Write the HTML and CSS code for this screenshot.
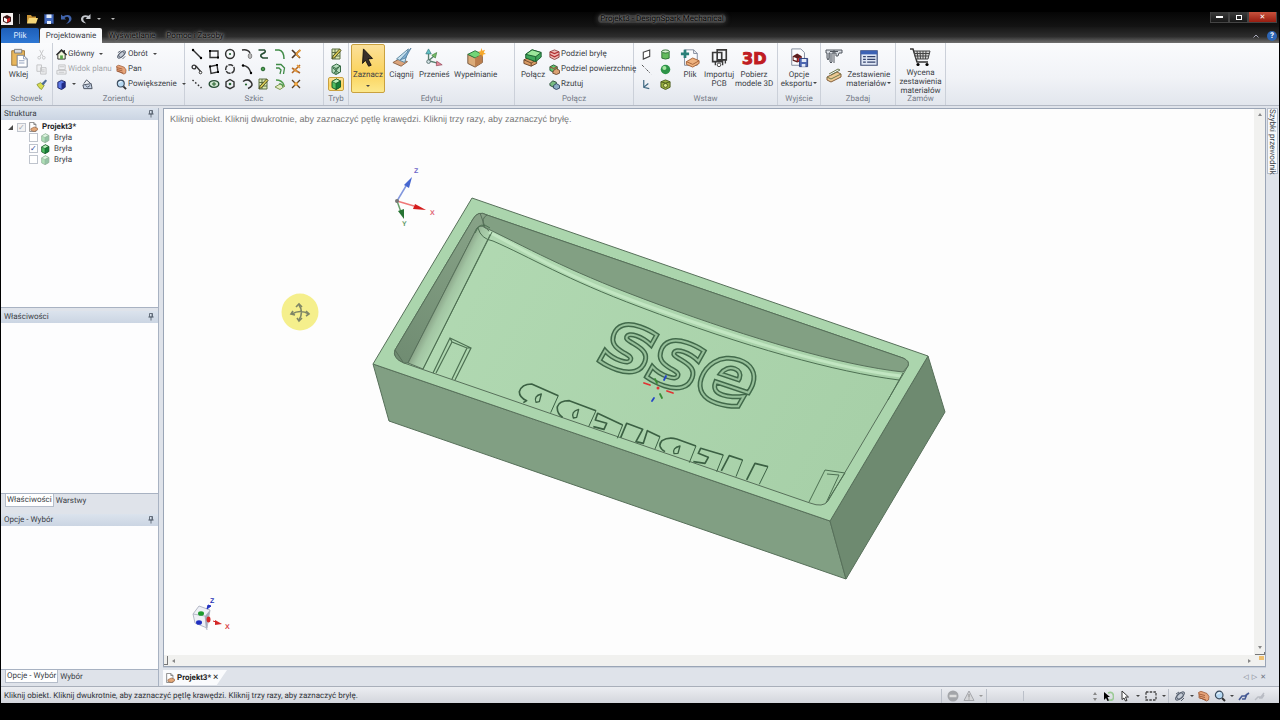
FILE: index.html
```html
<!DOCTYPE html>
<html lang="pl">
<head>
<meta charset="utf-8">
<title>Projekt3 - DesignSpark Mechanical</title>
<link rel="stylesheet" href="styles.css">
</head>
<body>
<svg class="defs" aria-hidden="true">
  <defs>
    <symbol id="doc" viewBox="0 0 12 12"><path d="M2 .5h5l2.500 2.500v8.500H2z" fill="#fff" stroke="#777"/><path d="M7 .5V3h2.500" fill="none" stroke="#777"/><path d="M3.500 8l4-2 4 1.500v2l-4 2-4-1.500z" fill="#e3a878" stroke="#8a5a3a" stroke-width=".7"/></symbol>
    <symbol id="cube" viewBox="0 0 12 12"><path d="M2 3.500L6.500 1 10.500 3v6L6 11.500 2 9.500z" fill="#4fbf62" stroke="#1c5c2a"/><path d="M2 3.500L6 5.500 10.500 3 6.500 1z" fill="#b9f0bd" stroke="#1c5c2a" stroke-width=".7"/><path d="M6 5.500v6l4.500-2.500V3z" fill="#16803a" stroke="#1c5c2a" stroke-width=".7"/></symbol>
    <symbol id="orbit" viewBox="0 0 12 12"><ellipse cx="6" cy="6" rx="5.500" ry="2.200" transform="rotate(-42 6 6)" fill="#c5ccd6" stroke="#596271"/><ellipse cx="6" cy="6" rx="3.600" ry="2.600" transform="rotate(-42 6 6)" fill="none" stroke="#596271"/><path d="M2 4l3-2M10 8l-3 3" stroke="#596271"/></symbol>
    <symbol id="hand" viewBox="0 0 12 12"><path d="M.5 2.500Q3 .5 5 2l4 1.500 2 3-.5 3.500-2 1-5-2.500-2.500-.5V5z" fill="#e6a47a" stroke="#93502e" stroke-width=".7"/><path d="M1 4l6 1.500M1 6l6 1.500M2 8l6 2" stroke="#93502e" stroke-width=".8"/></symbol>
    <symbol id="lens" viewBox="0 0 12 12"><path d="M8 8l3 3" stroke="#333" stroke-width="2"/><circle cx="5.200" cy="5" r="3.800" fill="#b6d8f2" stroke="#3a4a5c" stroke-width="1.200"/><path d="M3 4.500Q4 2.600 6 2.800" stroke="#fff" fill="none"/></symbol>
    <symbol id="pin" viewBox="0 0 6 8"><path d="M1.500.5h3v3.500h-3zM.3 4h5.400M3 4v3.500M4 .5v3.500" fill="none" stroke="#5a6472" stroke-width=".9"/></symbol>
    <symbol id="pencilbox" viewBox="0 0 12 12"><path d="M2 1h8v10H2zM2 4.500h8M2 8h8M5 1v10" fill="#dbe9b5" stroke="#5c7045"/><path d="M2 10.500L3 8l6.500-7L11 2.500 4.500 9.800z" fill="#d8ca54" stroke="#474a20" stroke-width=".9"/></symbol>
    <symbol id="cross" viewBox="0 0 12 12"><path d="M2 2l8 8M10 2L2 10" stroke="#4b3422" stroke-width="1.700"/><path d="M6 6l4.500-4M6 6l3.500 3.500" stroke="#e69a3b" stroke-width="1.700"/></symbol>
    <symbol id="undo" viewBox="0 0 12 12"><path d="M1 1.500v5h5L4.500 5Q8 2.500 9 5.500 9.500 8 6 11 12 9 11.500 5 10 0 3 3.200z" fill="#4164ac"/></symbol>
  </defs>
</svg>

<div class="app">
  <header class="titlebar">
    <div class="quick">
      <svg class="i12" viewBox="0 0 12 12"><path d="M0 0h12v12H0z" fill="#f5f0ef"/><path d="M2 4l4-2 4 2v4.500l-4 2-4-2z" fill="#3b1515"/><path d="M3 4.500l3 1.500v3.500l-3-1.500z" fill="#fff"/><path d="M6 6l3-1.500V8L6 9.500z" fill="#d52727"/></svg>
      <span class="tick"></span>
      <button aria-label="Otwórz"><svg class="i12" viewBox="0 0 12 12"><path d="M1 2h4l1 1.500h4V10H1z" fill="#c99335"/><path d="M3 5h9l-2 5.500H1z" fill="#f6d778"/></svg></button>
      <button aria-label="Zapisz"><svg class="i12" viewBox="0 0 12 12"><path d="M1.500 1.500h9v9h-9z" fill="#4269bd" stroke="#2b4277"/><path d="M3.500 1.500h5V5h-5zM4 8h4v3H4z" fill="#e7effb"/></svg></button>
      <button aria-label="Cofnij"><svg class="i12"><use href="#undo"/></svg></button>
      <button class="redo" aria-label="Ponów"><svg class="i12" viewBox="0 0 12 12"><path d="M10.500 1v5h-5l1.700-1.500Q3.500 3 3.200 6q0 2.500 3 4.500Q.5 9.500 1 5.500 2.500 1 8.700 2.800z" fill="#c3c6cc"/></svg></button>
      <span class="caret light"></span>
      <span class="caret light"></span>
    </div>
    <h1>Projekt3 - DesignSpark Mechanical</h1>
    <div class="winbtns"><button aria-label="Minimalizuj"><i class="min"></i></button><button aria-label="Przywróć"><i class="max"></i></button><button class="close" aria-label="Zamknij">✕</button></div>
  </header>

  <nav class="tabs">
    <button class="file">Plik</button><button class="active">Projektowanie</button><button class="dim">Wyświetlanie</button><button class="dim">Pomoc i Zasoby</button>
    <span class="grow"></span><button class="fold" aria-label="Zwiń wstążkę"><svg viewBox="0 0 6 4"><path d="M.5 3.500L3 1l2.500 2.500" fill="none" stroke="#aab"/></svg></button><button class="help" aria-label="Pomoc">?</button>
  </nav>

  <section class="ribbon">
    <div class="group g-clip">
      <div class="body">
        <button class="big"><svg viewBox="0 0 22 22"><path d="M3 3h14v16H3z" fill="#e8b65b" stroke="#9b7334"/><path d="M6 1.500h8v4H6z" fill="#d9dce2" stroke="#777"/><path d="M9 8h7l4 4v9H9z" fill="#fff" stroke="#6e7a90"/><path d="M16 8v4h4M11 14h6M11 16.500h6" fill="none" stroke="#8b9bb8"/></svg><span>Wklej</span></button>
        <div class="stack">
          <button aria-label="Wytnij"><svg class="i11 faded" viewBox="0 0 12 12"><path d="M4 1l3.500 7M8 1L4.500 8" stroke="#888"/><circle cx="3.500" cy="9.500" r="1.500" fill="none" stroke="#888"/><circle cx="8.500" cy="9.500" r="1.500" fill="none" stroke="#888"/></svg></button>
          <button aria-label="Kopiuj"><svg class="i11 faded" viewBox="0 0 12 12"><path d="M1 1h5v7H1zM5 4h6v7H5z" fill="#eee" stroke="#888"/><path d="M6.500 6.500h3M6.500 8.500h3" stroke="#888"/></svg></button>
          <button aria-label="Malarz formatów"><svg class="i11" viewBox="0 0 12 12"><path d="M1 6l4-2 4 3-3 4.500Q3 10 1 6z" fill="#d8dc4f" stroke="#7d8a2c" stroke-width=".8"/><path d="M6 5l4.500-4.500L12 2 8 7z" fill="#4d6c98"/></svg></button>
        </div>
      </div>
      <h2>Schowek</h2>
    </div>

    <div class="group g-orient">
      <div class="body">
        <div class="stack">
          <button><svg class="i11" viewBox="0 0 12 12"><path d="M2 6v5h8V6L6 2z" fill="#f1f6dd" stroke="#222"/><path d="M.5 6.500L6 1l5.500 5.500M9 1v3" fill="none" stroke="#222" stroke-width="1.300"/><path d="M4.500 7h3v4h-3z" fill="#59a64a"/></svg>Główny<i class="caret"></i></button>
          <button class="off"><svg class="i11" viewBox="0 0 12 12"><path d="M3 1h7v5H3zM1 7h10v4H1zM4 3h5M3 9h6" fill="#eee" stroke="#888"/></svg>Widok planu</button>
          <div class="pair"><button aria-label="Widok"><svg class="i11" viewBox="0 0 12 12"><path d="M2 3.500L6 1.500l4 1.500v6l-4 2.500-4-2z" fill="#5d7ae8" stroke="#171c5c"/><path d="M6 5v6.500L10 9V3z" fill="#202a83"/></svg><i class="caret"></i></button><button aria-label="Migawka"><svg class="i11" viewBox="0 0 12 12"><path d="M1 6.500l9-1.500 1 5.500H2z" fill="#c6d2e4" stroke="#444b5a"/><path d="M2 5l3-4 4 3.500M4 7l2 2 3-2" fill="none" stroke="#444b5a"/></svg></button></div>
        </div>
        <div class="stack second">
          <button><svg class="i11"><use href="#orbit"/></svg>Obrót<i class="caret"></i></button>
          <button><svg class="i11"><use href="#hand"/></svg>Pan</button>
          <button><svg class="i11"><use href="#lens"/></svg>Powiększenie<i class="caret"></i></button>
        </div>
      </div>
      <h2>Zorientuj</h2>
    </div>

    <div class="group g-sketch">
      <div class="tools">
        <button aria-label="Linia"><svg viewBox="0 0 12 12"><path d="M2 2l8 8" stroke="#333" stroke-width="1.400"/><circle cx="2" cy="2" r="1.200"/><circle cx="10" cy="10" r="1.200"/></svg></button>
        <button aria-label="Prostokąt"><svg viewBox="0 0 12 12"><path d="M2 3h8v6.500H2z" fill="none" stroke="#333" stroke-width="1.400"/><path d="M1 2h2v2H1zM9 8.500h2v2H9z"/></svg></button>
        <button aria-label="Okrąg"><svg viewBox="0 0 12 12"><circle cx="6" cy="6" r="4.400" fill="none" stroke="#333" stroke-width="1.500"/><circle cx="6" cy="6" r="1.100" fill="#25632d"/></svg></button>
        <button aria-label="Łuk styczny"><svg viewBox="0 0 12 12"><path d="M1 2Q7 1 9 5" fill="none" stroke="#333" stroke-width="1.500"/><ellipse cx="9" cy="8" rx="1.800" ry="2.600" fill="#bbb" stroke="#666" stroke-width=".7"/></svg></button>
        <button aria-label="Splajn"><svg viewBox="0 0 12 12"><path d="M1.500 2h6Q10 4 5 6q-3 2 1 4h5" fill="none" stroke="#274f35" stroke-width="1.600"/></svg></button>
        <button aria-label="Zaokrąglenie"><svg viewBox="0 0 12 12"><path d="M1 2h4Q10 3 10 11" fill="none" stroke="#3f8a46" stroke-width="1.500"/></svg></button>
        <button aria-label="Przytnij"><svg><use href="#cross"/></svg></button>
        <button aria-label="Linia styczna"><svg viewBox="0 0 12 12"><circle cx="3" cy="4" r="1.900" fill="none" stroke="#333" stroke-width="1.300"/><path d="M5 3l5 6" stroke="#333" stroke-width="1.300"/><circle cx="9.500" cy="9.500" r="1.300" fill="#fff" stroke="#333"/></svg></button>
        <button aria-label="Prostokąt z trzech punktów"><svg viewBox="0 0 12 12"><path d="M2 3.500L9 2l1 7-7 1.500z" fill="none" stroke="#333" stroke-width="1.400"/><path d="M1 2.500h2v2H1zM8 1h2v2H8zM9 8h2v2H9z"/></svg></button>
        <button aria-label="Okrąg z trzech punktów"><svg viewBox="0 0 12 12"><circle cx="6" cy="6" r="4.300" fill="none" stroke="#333" stroke-width="1.400" stroke-dasharray="5 1"/></svg></button>
        <button aria-label="Łuk"><svg viewBox="0 0 12 12"><path d="M2 2.500Q8 3 10 10" fill="none" stroke="#333" stroke-width="1.400"/><circle cx="2" cy="2.500" r="1.200"/><circle cx="10" cy="10" r="1.200"/></svg></button>
        <button aria-label="Punkt"><svg viewBox="0 0 12 12"><circle cx="6" cy="6" r="1.800" fill="#4fa052" stroke="#25632d"/></svg></button>
        <button aria-label="Odsunięcie"><svg viewBox="0 0 12 12"><path d="M2 1.500h5l3.500 3.500-1 6M2 5h3l2 2-1 4" fill="none" stroke="#3f8a46" stroke-width="1.300"/></svg></button>
        <button aria-label="Podziel"><svg viewBox="0 0 12 12"><path d="M2 10l8-8M2 5l3 2 5 3" stroke="#b56a27" stroke-width="1.600" fill="none"/><path d="M7 2l3 3M4 6l3 3" stroke="#e69a3b" stroke-width="1.500"/></svg></button>
        <button aria-label="Linia konstrukcyjna"><svg viewBox="0 0 12 12"><path d="M1.500 2l9 8" stroke="#333" stroke-width="1.500" stroke-dasharray="1.600 2"/></svg></button>
        <button aria-label="Elipsa"><svg viewBox="0 0 12 12"><ellipse cx="6" cy="6" rx="4.800" ry="3.400" fill="#cfe5d0" stroke="#274f35" stroke-width="1.400"/><path d="M4 6h4M6 4v4" stroke="#25632d"/></svg></button>
        <button aria-label="Wielokąt"><svg viewBox="0 0 12 12"><path d="M6 1.500l4 2.500v4.500L6 10.700 2 8.500V4z" fill="none" stroke="#333" stroke-width="1.400"/><circle cx="6" cy="6" r="1.300" fill="#25632d"/></svg></button>
        <button aria-label="Łuk ze środkiem"><svg viewBox="0 0 12 12"><path d="M2 3.500Q7 0 10 4t-3 6.500" fill="none" stroke="#333" stroke-width="1.500"/><circle cx="5" cy="6.500" r="1.100" fill="#25632d"/></svg></button>
        <button aria-label="Szkic na płaszczyźnie"><svg><use href="#pencilbox"/></svg></button>
        <button aria-label="Rzutuj na szkic"><svg viewBox="0 0 12 12"><path d="M1 9l5-3 5 2-5 3.500z" fill="#e6ebc6" stroke="#7e9a52"/><path d="M2 2q6 0 8 5M5 6q3-1 4 3" fill="none" stroke="#4e9a4b" stroke-width="1.300"/></svg></button>
        <button aria-label="Narożnik"><svg viewBox="0 0 12 12"><path d="M2 2l8 8M10 2L2 10" stroke="#5b4020" stroke-width="1.300"/><circle cx="6" cy="6" r="2" fill="#f0a641"/></svg></button>
      </div>
      <h2>Szkic</h2>
    </div>

    <div class="group g-mode">
      <div class="body modes">
        <button aria-label="Tryb szkicu"><svg><use href="#pencilbox"/></svg></button>
        <button aria-label="Tryb przekroju"><svg viewBox="0 0 12 12"><path d="M2 3.500L6.500 1 10.500 3v6L6 11.500 2 9.500z" fill="#b6dcbd" stroke="#376b45"/><path d="M2 3.500l4 2 4.500-2.500M6 5.500v6M3 5l6 5M9 4L4 10" fill="none" stroke="#376b45"/></svg></button>
        <button class="on" aria-label="Tryb 3D"><svg><use href="#cube"/></svg></button>
      </div>
      <h2>Tryb</h2>
    </div>

    <div class="group g-edit">
      <div class="body">
        <button class="big on"><svg viewBox="0 0 22 22"><path d="M6 1l10 10.500-5 .5 3.500 7L11.700 20 8.300 13.500 5 17z" fill="#3a302a" stroke="#120e0c"/></svg><span>Zaznacz</span><i class="caret"></i></button>
        <button class="big"><svg viewBox="0 0 22 22"><path d="M1 16l7-4 9 3-7 5z" fill="#dba47c" stroke="#8a6244"/><path d="M5 12L18 1l-4 15z" fill="#c9e3f1" stroke="#55819c"/><path d="M9 13L21 0l-6 11z" fill="#7faed0" stroke="#3f6b8e" stroke-width=".7"/></svg><span>Ciągnij</span></button>
        <button class="big"><svg viewBox="0 0 22 22"><path d="M5 14V5M5 14l11 3M5 14l7-6" stroke="#58806f" stroke-width="1.500"/><path d="M5 1L2 6.500h6z" fill="#5fc0c4" stroke="#357479" stroke-width=".7"/><path d="M20 18.500l-6-4-.5 5z" fill="#e58b9b" stroke="#8c3d50" stroke-width=".7"/><path d="M14 5L8.500 8l4 3z" fill="#76be6a" stroke="#3e7839" stroke-width=".7"/><circle cx="5" cy="15" r="2" fill="#d1e1e5" stroke="#58706f"/></svg><span>Przenieś</span></button>
        <button class="big"><svg viewBox="0 0 22 22"><path d="M2 7l8 3.500 8-3.500v9l-8 5-8-4z" fill="#dbab79" stroke="#6e5238"/><path d="M2 7l8-4 8 4-8 4z" fill="#72d577" stroke="#28723a"/><path d="M10 11v10l8-5V7z" fill="#bb7e4d"/><path d="M17 0l1 3 3-1-1.500 3L22 6.500l-3 .7L18.500 10 17 7.500l-3 1 1.500-3L13 4l3-.5z" fill="#f6a82c"/></svg><span>Wypełnianie</span></button>
      </div>
      <h2>Edytuj</h2>
    </div>

    <div class="group g-join">
      <div class="body">
        <button class="big"><svg viewBox="0 0 22 22"><path d="M1 13l6-3 8 3v4l-6 3-8-3z" fill="#d99b65" stroke="#69452b"/><path d="M1 13l8 3.500 6-3.500M9 16.500V20" fill="none" stroke="#69452b"/><path d="M3 7l7-5 10 3v5l-6 5-11-4z" fill="#3fa65a" stroke="#17592c"/><path d="M3 7l7-5 10 3-6 4.500z" fill="#9be79b" stroke="#17592c"/><path d="M14 9.500V15" stroke="#17592c"/></svg><span>Połącz</span></button>
        <div class="stack">
          <button><svg class="i11" viewBox="0 0 12 12"><path d="M1 3l5-2 5 2v6l-5 2.500L1 9z" fill="#f0b7b2" stroke="#8d4848"/><path d="M1 3l5 2 5-2M1 6l5 2.500L11 6" fill="none" stroke="#b02d30" stroke-width="1.200"/></svg>Podziel bryłę</button>
          <button><svg class="i11" viewBox="0 0 12 12"><path d="M1 3l4-2 4 2v4L5 9 1 7z" fill="#62c26b" stroke="#265c34"/><path d="M5 7l3-2 3.500 2v3L8 11.500 4 10z" fill="#dba172" stroke="#6c4930"/><path d="M1 3l4 2 4-2" fill="none" stroke="#b43232"/></svg>Podziel powierzchnię</button>
          <button><svg class="i11" viewBox="0 0 12 12"><path d="M1 5l3-3 4 1.500v3L5 9 1 7z" fill="#78bc83" stroke="#2b4c38"/><path d="M5 7l3-2 3.500 2v3L8 11.500 5 10z" fill="#8dadc6" stroke="#2f4560"/></svg>Rzutuj</button>
        </div>
      </div>
      <h2>Połącz</h2>
    </div>

    <div class="group g-insert">
      <div class="body">
        <div class="stack mini">
          <button aria-label="Płaszczyzna"><svg class="i11" viewBox="0 0 12 12"><path d="M2.500 3.500L9.500 1v7L2.500 11z" fill="#fff" stroke="#444" stroke-width="1.200"/></svg></button>
          <button aria-label="Oś"><svg class="i11" viewBox="0 0 12 12"><path d="M1 1l10 10" stroke="#444" stroke-dasharray="3 1.500 1 1.500"/></svg></button>
          <button aria-label="Układ współrzędnych"><svg class="i11" viewBox="0 0 12 12"><path d="M3 1v8l6 1.500M3 9l5-4" fill="none" stroke="#3e6781" stroke-width="1.300"/></svg></button>
        </div>
        <div class="stack mini">
          <button aria-label="Walec"><svg class="i11" viewBox="0 0 12 12"><path d="M2 2.500v7.500q4 2 8 0V2.500z" fill="#63bb5d" stroke="#2c6d33"/><ellipse cx="6" cy="2.700" rx="4" ry="1.700" fill="#d7f2d0" stroke="#2c6d33"/></svg></button>
          <button aria-label="Kula"><svg class="i11" viewBox="0 0 12 12"><circle cx="6" cy="6" r="5.200" fill="#2d9448"/><circle cx="4.800" cy="4.300" r="2.200" fill="#a6e5a1"/></svg></button>
          <button aria-label="Powłoka"><svg class="i11" viewBox="0 0 12 12"><path d="M1 3l5-2 5 2v6l-5 2.500L1 9z" fill="#96ad3e" stroke="#4b5a1f"/><circle cx="6" cy="7" r="2.200" fill="#dce78b" stroke="#4b5a1f"/><path d="M1 3l5 1.500L11 3" fill="none" stroke="#4b5a1f"/></svg></button>
        </div>
        <button class="big w-file"><svg viewBox="0 0 22 22"><path d="M5 2h10l4 4v13H5z" fill="#fafbfd" stroke="#7c8798"/><path d="M15 2v4h4" fill="none" stroke="#7c8798"/><path d="M5.500 2v9M1 6.500h9" stroke="#2a8078" stroke-width="3"/><path d="M7 15l7-4 7 3v3l-7 4-7-3z" fill="#eeb27f" stroke="#a25e33"/><path d="M7 15l7 3 7-4" fill="none" stroke="#a25e33"/></svg><span>Plik</span></button>
        <button class="big w-pcb"><svg viewBox="0 0 22 22"><path d="M9 2h10v11H9zM4 5h10v10H4z" fill="none" stroke="#3a3a3a" stroke-width="1.800"/><path d="M7 15v4M15 13v6M18 13v4" stroke="#3a3a3a" stroke-width="1.500"/><circle cx="11" cy="18.500" r="2" fill="#fff" stroke="#3a3a3a"/></svg><span>Importuj<br>PCB</span></button>
        <button class="big w-3d"><b class="three">3D</b><span>Pobierz<br>modele 3D</span></button>
      </div>
      <h2>Wstaw</h2>
    </div>

    <div class="group g-out">
      <div class="body"><button class="big"><svg viewBox="0 0 22 22"><path d="M3 1h10l4 4v14H3z" fill="#fafbfd" stroke="#7c8798"/><path d="M4 9l5-3 5 3v5l-5 2-5-2z" fill="#5d1d1d"/><path d="M5 10l3.500 1.300V14L5 13z" fill="#fff"/><path d="M9.500 11.500L13 10v3.500L9.500 15z" fill="#db3939"/><path d="M11.500 11.500h9v9h-9z" fill="#4d67b2" stroke="#2c3d79"/><path d="M14 12h5v3.500h-5zM14 17.500h4v3h-4z" fill="#e3eaf7"/></svg><span>Opcje<br>eksportu<i class="caret"></i></span></button></div>
      <h2>Wyjście</h2>
    </div>

    <div class="group g-inspect">
      <div class="body">
        <div class="duo">
          <button aria-label="Zmierz"><svg viewBox="0 0 18 16"><path d="M1 2h16v3h-3l-1 3h-2V5H7v9L6 15l-1-1V5H4v5L3 12l-1-2V5H1z" fill="#d9dde3" stroke="#51565e"/><path d="M9 2v13M5 3.500h8" stroke="#51565e"/></svg></button>
          <button aria-label="Masa"><svg viewBox="0 0 18 16"><path d="M2 10l10-5 4 2v3L6 15l-4-2z" fill="#edc993" stroke="#85603c"/><path d="M2 10l4 2 10-5M4 7l9-5 2 1-9 5" fill="none" stroke="#6e7a4e"/></svg></button>
        </div>
        <button class="big"><svg viewBox="0 0 22 22"><path d="M2 3h18v16H2z" fill="#dfe7f5" stroke="#3f4e77" stroke-width="1.300"/><path d="M2 3h18v4H2z" fill="#3c62b4"/><path d="M4.500 9.500h3M4.500 12.500h3M4.500 15.500h3M9 9.500h9M9 12.500h9M9 15.500h9" stroke="#34436e" stroke-width="1.300"/></svg><span>Zestawienie<br>materiałów<i class="caret"></i></span></button>
      </div>
      <h2>Zbadaj</h2>
    </div>

    <div class="group g-order">
      <div class="body"><button class="big tri"><svg viewBox="0 0 22 20"><path d="M1 2h3l4 13h11" fill="none" stroke="#333" stroke-width="1.500"/><path d="M5 4h16l-2 8H7z" fill="#d5d5d5" stroke="#444"/><path d="M8 4l1 8M11 4l.5 8M14 4v8M17 4l-.5 8M5.500 6.500h15M6 9h14" stroke="#444"/><circle cx="9" cy="17.500" r="1.600"/><circle cx="18" cy="17.500" r="1.600"/></svg><span>Wycena<br>zestawienia<br>materiałów</span></button></div>
      <h2>Zamów</h2>
    </div>
  </section>

  <main class="work">
    <aside class="side">
      <section class="panel p-tree">
        <h3>Struktura<svg><use href="#pin"/></svg></h3>
        <ul class="tree">
          <li class="root"><i class="open"></i><input type="checkbox" id="t0" class="part" checked><label for="t0"><svg><use href="#doc"/></svg>Projekt3*</label></li>
          <li><input type="checkbox" id="t1"><label for="t1"><svg class="ghost"><use href="#cube"/></svg>Bryła</label></li>
          <li><input type="checkbox" id="t2" checked><label for="t2"><svg><use href="#cube"/></svg>Bryła</label></li>
          <li><input type="checkbox" id="t3"><label for="t3"><svg class="ghost"><use href="#cube"/></svg>Bryła</label></li>
        </ul>
      </section>
      <section class="panel p-props">
        <h3>Właściwości<svg><use href="#pin"/></svg></h3>
        <div class="blank"></div>
        <div class="ptabs"><button class="active">Właściwości</button><button>Warstwy</button></div>
      </section>
      <section class="panel p-opts">
        <h3>Opcje - Wybór<svg><use href="#pin"/></svg></h3>
        <div class="blank"></div>
        <div class="ptabs"><button class="active">Opcje - Wybór</button><button>Wybór</button></div>
      </section>
    </aside>

    <div class="docarea">
      <div class="view">
        <div class="canvas">
          <p class="hint">Kliknij obiekt. Kliknij dwukrotnie, aby zaznaczyć pętlę krawędzi. Kliknij trzy razy, aby zaznaczyć bryłę.</p>
          <svg class="scene" viewBox="164 109 1090 546" role="img" aria-label="Model formy">
            <defs>
              <linearGradient id="gFloor" gradientUnits="userSpaceOnUse" x1="440" y1="250" x2="840" y2="480"><stop offset="0" stop-color="#b1d9b2"/><stop offset="1" stop-color="#a7d0a8"/></linearGradient>
              <linearGradient id="gFillet" gradientUnits="userSpaceOnUse" x1="438" y1="297" x2="458" y2="307"><stop offset="0" stop-color="#81997f"/><stop offset=".45" stop-color="#a2c5a3"/><stop offset="1" stop-color="#b1d9b2"/></linearGradient>
              <linearGradient id="gWall" gradientUnits="userSpaceOnUse" x1="475" y1="215" x2="400" y2="360"><stop offset="0" stop-color="#87a287"/><stop offset="1" stop-color="#708c72"/></linearGradient>
            </defs>
            <g stroke="#57705a" stroke-width="1" stroke-linejoin="round">
              <path d="M373 364L830 521 846 579 389 421z" fill="#819f83"/>
              <path d="M928 356L945 412 846 579 830 521z" fill="#6e8a70"/>
              <path d="M472 198L928 356 830 521 373 364z" fill="#abd5ad"/>
              <path d="M487 215L903 358Q910 361 908 366L828 501Q823 508 810 503L404 363Q392 358 395 350L473 219Q478 210 487 215z" fill="url(#gFloor)"/>
              <path d="M404 363Q392 358 395 350L473 219Q478 210 487 215L484 226 477 228 408 363z" fill="url(#gWall)"/>
              <path d="M408 363L477 228Q481 222 491 233L423 369z" fill="url(#gFillet)"/>
              <path d="M487 215L903 358Q910 361 908 366L903 372C840 365 750 338 660 305S540 254 484 227Q481 218 487 215z" fill="#82a083"/>
              <path d="M395 350L403 362M480 213L485 227" fill="none"/>
            </g>
            <path d="M901 376C838 369 748 342 656 309S538 258 489 232" fill="none" stroke="#c2e6c2" stroke-width="3"/>
            <g fill="none" stroke="#4d7052" stroke-width="1">
              <path d="M478 228Q481 239 493 241C530 257 565 279 640 307 745 347 836 372 899 380M423 369L492 232M903 373L888 400M475 233Q480 220 490 228"/>
              <path d="M433 373L450 338 471 348 455 380M436 373L452 342 467 348 452 379M450 338L452 342M467 348L471 348" stroke-width="1.200"/>
              <path d="M809 502L825 470 845 473M827 474L839 475 826 503M845 473L828 500"/>
            </g>
            <g class="engraved" transform="rotate(18.500 597 362)">
              <text class="cut-out" x="598" y="362">sse</text>
              <text class="cut-in" x="598" y="362">sse</text>
            </g>
            <g transform="translate(500 310) scale(.3333)" fill="none" stroke="#3b6043" stroke-linejoin="round">
              <path stroke-width="5" d="M70 278L80 272Q58 262 58 245 65 222 95 222L175 257M188 322Q170 310 172 290 178 272 208 272L288 302M280 350L312 358 320 340 286 330 293 310 368 345M362 383L380 340 428 358 408 395 430 400 442 362 480 380M495 425Q470 410 486 392 505 380 530 387L588 408M580 455L615 460 625 442 595 430 602 415 670 435M664 483L688 437 728 450M740 510L765 460 804 470"/>
              <path stroke-width="3" d="M175 257L152 308M288 302L266 350M368 345L352 385M480 380L465 417M588 408L568 458M670 435L650 485M728 450L708 500M804 470L778 523"/>
              <path stroke-width="4" d="M108 277Q100 258 124 252L118 275zM220 324Q212 305 236 298L230 322zM522 431Q516 414 540 408L534 430z"/>
            </g>
            <g stroke-width="1.800" stroke-linecap="round">
              <path d="M644 383l6 2M667 391l6 2" stroke="#e13434"/><path d="M666 376l-2 4M654 398l-2 3" stroke="#2444c8"/><path d="M655 379l2 4M660 394l2 4" stroke="#3a8a35"/><circle cx="658" cy="388" r="1.500" fill="#e13434"/>
            </g>
            <g class="axes">
              <path d="M397 201L406 186" stroke="#8297dd" stroke-width="1.500"/><path d="M412 177L404 185 409 188z" fill="#4667d0"/>
              <path d="M397 201L414 206" stroke="#ef7777" stroke-width="1.500"/><path d="M426 210L415 204 413 209z" fill="#d41c1c"/>
              <path d="M397 201L401 212" stroke="#69a06c" stroke-width="1.500"/><path d="M404 219L398 211 404 209z" fill="#277333"/><circle cx="397" cy="201" r="2" fill="#777"/>
              <text x="414" y="173" fill="#6d68c8">Z</text><text x="430" y="215" fill="#e06070">X</text><text x="402" y="226" fill="#5c9966">Y</text>
            </g>
            <circle cx="300" cy="312" r="18.500" fill="#f5ef8c"/>
            <g fill="none" stroke="#7e8566" stroke-width="1.600"><path d="M292 314Q300 309 309 314M299 305Q304 312 299 320"/><path d="M293 311l-2 3 4 1M306 311l3 3-3 2M296 307l3-3 3 3M302 318l-3 3-2-3"/></g>
            <g class="axes">
              <path d="M193 614L199 606 210 610 207 628 195 623z" fill="#eef0f6" stroke="#b4b8c6"/><path d="M193 614L205 616 207 630" fill="none" stroke="#b4b8c6"/>
              <path d="M205 616L210 610 206 630z" fill="#a5abba"/><ellipse cx="201" cy="613.500" rx="3" ry="2.300" fill="#1d9a2c"/><ellipse cx="199" cy="622.500" rx="3" ry="2.300" fill="#2030c0"/><ellipse cx="208.500" cy="619.500" rx="2" ry="3" fill="#d42828"/>
              <path d="M207 609l1-4 3 1z" fill="#2030c0" stroke="#2030c0"/><path d="M213 621l3 1" stroke="#d42828"/><path d="M215 620l7 4-7 1z" fill="#d42828"/>
              <text x="210" y="603" fill="#2a35b8">Z</text><text x="225" y="629" fill="#d83a3a">X</text>
            </g>
          </svg>
        </div>
        <div class="vbar"><button aria-label="W górę"><i class="tri-up"></i></button><span class="grow"></span><button aria-label="W dół"><i class="tri-down"></i></button><span class="split"></span></div>
        <div class="hbar"><span class="split"></span><button aria-label="W lewo"><i class="tri-left"></i></button><span class="grow"></span><button aria-label="W prawo"><i class="tri-right"></i></button></div>
        <div class="corner"><i></i></div>
      </div>
      <div class="doctabs">
        <div class="doctab"><svg><use href="#doc"/></svg><b>Projekt3*</b><button aria-label="Zamknij kartę">×</button></div>
        <div class="nav"><button aria-label="Poprzednia">◁</button><button aria-label="Następna">▷</button><button aria-label="Zamknij">✕</button></div>
      </div>
    </div>
    <div class="rail"><button>Szybki przewodnik</button></div>
  </main>

  <footer class="status">
    <span>Kliknij obiekt. Kliknij dwukrotnie, aby zaznaczyć pętlę krawędzi. Kliknij trzy razy, aby zaznaczyć bryłę.</span>
    <div class="sbtns warn">
      <button aria-label="Zatrzymaj"><svg viewBox="0 0 12 12"><circle cx="6" cy="6" r="5.500" fill="#a3a5a9"/><path d="M2.500 6h7" stroke="#ddd" stroke-width="2.500"/></svg></button>
      <button aria-label="Ostrzeżenia"><svg viewBox="0 0 12 12"><path d="M6 1l5 9.500H1z" fill="#d5d6d9" stroke="#a4a6ab"/><path d="M6 4v3.500M6 8.500v1" stroke="#888"/></svg></button><i class="caret"></i>
    </div>
    <div class="cells"><i></i></div>
    <div class="sbtns sel">
      <span class="spin"><i class="tri-up"></i><i class="tri-down"></i></span>
      <button aria-label="Powrót"><svg viewBox="0 0 12 12"><path d="M6 3q5-2 5.500 3T7 10" fill="none" stroke="#9ccb96" stroke-width="1.700"/><path d="M2 2l6 5H5.500L7 10.500 5.500 11 4 8 2 10z"/></svg></button>
      <button aria-label="Wybór"><svg viewBox="0 0 12 12"><path d="M3 1l6.500 6H6.500L8 10.500 6.500 11 5 8 3 9.500z" fill="#fff" stroke="#333"/></svg></button><i class="caret"></i>
      <button aria-label="Ramka"><svg viewBox="0 0 12 12"><path d="M1 2h10v8H1z" fill="none" stroke="#444" stroke-width="1.300" stroke-dasharray="2.500 1.200"/></svg></button><i class="caret"></i>
    </div>
    <div class="sbtns nav3">
      <button aria-label="Obrót"><svg><use href="#orbit"/></svg></button><i class="caret"></i>
      <button aria-label="Pan"><svg><use href="#hand"/></svg></button>
      <button aria-label="Powiększenie"><svg><use href="#lens"/></svg></button><i class="caret"></i>
      <button aria-label="Poprzedni widok"><svg viewBox="0 0 12 12"><path d="M1 10l3-4h3l4-3M4 9h3l2-5" fill="none" stroke="#465a94" stroke-width="1.600"/></svg></button>
      <button aria-label="Następny widok"><svg viewBox="0 0 12 12"><path d="M1 10l3-3h3l3-4M5 8h3l2-3" fill="none" stroke="#b9bcc4" stroke-width="1.400"/></svg></button>
    </div>
  </footer>
</div>
</body>
</html>
```
FILE: styles.css
```css
* { box-sizing: border-box; }

body {
  margin: 0;
  min-height: 100vh;
  padding: 12px 1px 17px;
  display: flex;
  background: #000;
  font: 8px/10px Roboto, "Liberation Sans", Arial, sans-serif;
  text-rendering: geometricPrecision;
  color: #3b3f47;
}

h1, h2, h3, p, ul { margin: 0; padding: 0; font: inherit; list-style: none; }
button { margin: 0; padding: 0; border: 0; background: none; font: inherit; color: inherit; white-space: nowrap; text-rendering: inherit; }
svg { display: block; flex: none; }
.defs { position: absolute; width: 0; height: 0; }
.grow { flex: 1; }
.i11 { width: 11px; height: 11px; }
.i12 { width: 12px; height: 12px; }
.faded, .off { opacity: .45; }
.caret { display: inline-block; flex: none; border: 2px solid transparent; border-top-color: #444; border-bottom: 0; }
.caret.light { border-top-color: #bbb; }

.app { flex: 1; display: flex; flex-direction: column; min-width: 0; background: #dfe3ea; }

/* title bar */
.titlebar { height: 15px; display: grid; grid-template-columns: 1fr auto 1fr; align-items: center; background: linear-gradient(#050505, #141414); }
.quick { display: flex; align-items: center; gap: 5px; height: 13px; align-self: start; }
.tick { width: 1px; height: 10px; background: #777; margin: 0 1px; }
.redo { margin-left: 3px; }
.quick .caret + .caret { margin-left: 5px; }
.titlebar h1 { padding: 0 2px; color: #050505; border-radius: 5px; background: #3c3c3c; box-shadow: 0 0 4px 1px #333; line-height: 8px; margin: 0 0 2px 44px; text-shadow: 0 0 2px #888, 0 0 3px #777; }
.winbtns { justify-self: end; display: flex; align-self: start; margin-right: 2px; }
.winbtns button { width: 19px; height: 11px; display: grid; place-items: center; background: linear-gradient(#3c3c3c, #181818); color: #fff; border: 1px solid #444; border-top: 0; }
.winbtns .close { width: 29px; background: linear-gradient(#c8523d, #971c10); font: bold 7px/8px "DejaVu Sans", sans-serif; }
.min { width: 7px; height: 2px; background: #fff; }
.max { width: 6px; height: 5px; border: 1px solid #fff; }

/* ribbon tabs */
.tabs { height: 16px; display: flex; align-items: stretch; padding-top: 1px; background: linear-gradient(#171717, #2d2d2d 60%, #707070); }
.file { width: 38px; color: #e4efff; background: linear-gradient(#1e5eb8, #2d77d4); border-radius: 2px 2px 0 0; }
.tabs .active { width: 62px; margin-left: 1px; background: #f9fafc; border-radius: 2px 2px 0 0; }
.dim { width: 60px; color: #0c0c0c; text-shadow: 0 0 2px #999, 0 0 3px #888, 0 0 4px #777; }
.dim + .dim { width: 66px; }
.fold { width: 22px; display: grid; place-items: center; }
.fold svg { width: 6px; height: 4px; }
.help { align-self: center; width: 10px; height: 10px; margin-right: 2px; border-radius: 50%; background: #2e66b5; color: #fff; font-weight: bold; line-height: 10px; }

/* ribbon */
.ribbon { display: flex; height: 63px; background: linear-gradient(#fafbfd, #f1f3f7 55%, #e2e6ed); border-bottom: 1px solid #b3b9c4; overflow: hidden; }
.group { display: flex; flex-direction: column; border-right: 1px solid #cbd0d9; padding: 1px 2px 0; }
.group h2 { margin-top: auto; text-align: center; color: #757b87; line-height: 12px; }
.body { display: flex; align-items: flex-start; }
.g-clip { width: 52px; } .g-orient { width: 132px; } .g-sketch { width: 139px; } .g-mode { width: 25px; }
.g-edit { width: 166px; } .g-join { width: 119px; } .g-insert { width: 144px; } .g-out { width: 43px; }
.g-inspect { width: 75px; } .g-order { width: 50px; }

.big { display: flex; flex-direction: column; align-items: center; min-width: 31px; height: 49px; padding: 3px 0 0; border: 1px solid transparent; line-height: 9px; text-align: center; }
.big svg { width: 22px; height: 20px; margin-bottom: 2px; }
.big .caret { margin-top: 6px; }
.big span .caret { margin: 0 0 2px 1px; }
.big.on, .modes .on { border-color: #c9a13f; border-radius: 2px; background: linear-gradient(#fbe09a, #fbd35c 60%, #fce88c); }
.three { width: 24px; height: 20px; margin-bottom: 2px; font: 900 16px/19px "DejaVu Sans", sans-serif; color: #c01c22; -webkit-text-stroke: 1px #c01c22; display: grid; place-items: center; }
.stack { display: flex; flex-direction: column; gap: 3px; padding-top: 4px; }
.stack button { display: flex; align-items: center; gap: 1px; height: 12px; }
.stack .caret { margin-left: 4px; }
.g-clip .stack { margin-left: 2px; }
.g-orient .body { padding-left: 1px; }
.g-orient .stack { width: 60px; }
.pair { display: flex; gap: 6px; }
.g-edit .body { gap: 1px; }
.g-edit .on { min-width: 34px; }
.g-edit .big:last-child { width: 48px; }
.g-join .big { min-width: 32px; }
.mini { width: 19px; align-items: center; }
.w-file { width: 30px; } .w-pcb { width: 28px; min-width: 28px; } .w-3d { width: 42px; }
.g-insert .body { padding-left: 1px; }
.g-insert .w-file { min-width: 30px; }
.g-out .body, .g-order .body { justify-content: center; }
.duo { width: 22px; padding-top: 4px; display: grid; gap: 3px; justify-items: center; }
.duo svg { width: 18px; height: 16px; }
.g-inspect .big { width: 49px; }
.tri { padding-top: 2px; }
.tri svg { margin-bottom: 1px; }

.tools { display: grid; grid-template-columns: repeat(7, auto); justify-content: space-between; row-gap: 3px; padding: 4px 19px 0 4px; }
.tools svg, .modes svg { width: 12px; height: 12px; }
.tools button { height: 12px; }
.modes { flex-direction: column; align-items: center; gap: 1px; padding-top: 3px; }
.modes button { width: 16px; height: 14px; border: 1px solid transparent; display: grid; place-items: center; }

/* workspace */
.work { flex: 1; display: flex; min-height: 0; padding-top: 2px; }
.side { width: 158px; flex: none; display: flex; flex-direction: column; gap: 3px; border-right: 1px solid #a8b2c2; }
.panel { display: flex; flex-direction: column; }
.panel h3 { height: 12px; flex: none; display: flex; justify-content: space-between; align-items: center; padding: 0 4px 0 3px; background: linear-gradient(#dbe3ed, #cbd5e3); }
.panel h3 svg { width: 6px; height: 8px; }
.p-tree { flex: 200; } .p-props { flex: 201; } .p-opts { flex: 172; }
.blank, .tree { flex: 1; background: #fdfdfe; border-bottom: 1px solid #a8b2c2; }
.tree { padding: 2px 0 0 28px; }
.tree li { display: flex; align-items: center; height: 11px; }
.tree .root { height: 10px; margin-left: -22px; font-weight: bold; color: #1e1e1e; }
.tree label { display: flex; align-items: center; gap: 4px; margin-left: 2px; }
.tree svg { width: 10px; height: 10px; }
.tree input { appearance: none; width: 9px; height: 9px; margin: 0; border: 1px solid #bfc4cd; background: #fff; font: bold 8px/7px "DejaVu Sans", sans-serif; color: #31489b; }
.tree input:checked::after { content: "✓"; display: block; }
.tree .part { color: #a0a5ad; background: #f2f2f2; }
.ghost { opacity: .45; }
.open { border: 4px solid transparent; border-width: 0 0 5px 5px; border-bottom-color: #4a4a4a; margin: 0 4px 0 1px; }
.ptabs { display: flex; gap: 1px; height: 13px; padding-left: 4px; }
.p-props .ptabs { margin-bottom: 4px; }
.p-opts .ptabs { height: 16px; padding-bottom: 3px; }
.ptabs button { padding: 0 1px; }
.ptabs .active { background: #fff; border: 1px solid #b5bdca; border-top: 0; }

.docarea { flex: 1; min-width: 0; display: flex; flex-direction: column; padding-left: 4px; }
.view { flex: 1; min-height: 0; display: grid; grid-template: minmax(0, 1fr) 11px / minmax(0, 1fr) 11px; border: 1px solid #9aa5b6; background: #fdfdfd; }
.canvas { position: relative; overflow: hidden; }
.hint { position: absolute; left: 6px; top: 4px; font: 9px/12px "Liberation Sans", Arial, sans-serif; color: #777; white-space: nowrap; }
.scene { width: 100%; height: 100%; }
.engraved text { font: italic bold 84px "DejaVu Sans", sans-serif; }
.cut-out { fill: none; stroke: #41694a; stroke-width: 5px; }
.cut-in { fill: none; stroke: #97c09a; stroke-width: 2px; }
.axes text { font: bold 7px "Liberation Sans", sans-serif; }

.vbar, .hbar { display: flex; align-items: center; background: #f1f1ef; }
.vbar { flex-direction: column; }
.vbar button, .hbar button { width: 10px; height: 10px; display: grid; place-items: center; }
.vbar .split { width: 10px; height: 3px; border-bottom: 1px solid #777; border-right: 1px solid #777; }
.hbar .split { width: 4px; height: 9px; border-bottom: 1px solid #777; border-right: 1px solid #777; }
.corner { background: #f1f1ef; }
.corner i { display: block; width: 5px; height: 4px; margin: 1px 0 0 5px; background: #efc070; }
.tri-up, .tri-down, .tri-left, .tri-right { border: 2px solid transparent; }
.tri-up { border-top: 0; border-bottom: 3px solid #888; }
.tri-down { border-bottom: 0; border-top: 3px solid #888; }
.tri-left { border-left: 0; border-right: 3px solid #888; }
.tri-right { border-right: 0; border-left: 3px solid #888; }

.doctabs { height: 19px; padding-top: 2px; display: flex; justify-content: space-between; border-top: 1px solid #c8cfda; }
.doctab { height: 15px; width: 64px; display: flex; align-items: center; gap: 2px; padding-left: 2px; background: #fafbfd; clip-path: polygon(0 0, 100% 0, 84% 100%, 0 100%); color: #222; }
.doctab svg { width: 10px; height: 10px; }
.doctab button { font-size: 10px; }
.nav { display: flex; gap: 3px; align-items: center; height: 13px; font: 7px/8px "DejaVu Sans", sans-serif; color: #6b7280; }

.rail { width: 13px; flex: none; display: flex; align-items: flex-start; }
.rail button { writing-mode: vertical-rl; width: 11px; height: 66px; margin-left: 1px; line-height: 10px; border: 1px solid #b5bdca; background: #f5f7fa; }

/* status bar */
.status { height: 17px; flex: none; display: flex; align-items: center; padding: 2px 13px 0 3px; border-top: 1px solid #a9afba; background: linear-gradient(#eceef2, #d3d6dc); color: #2e3238; white-space: nowrap; }
.status > span { flex: 1; }
.sbtns { display: flex; align-items: center; gap: 4px; height: 14px; border-left: 1px solid #bbc0c9; padding: 0 5px; }
.sbtns svg { width: 12px; height: 12px; }
.warn { width: 46px; border-right: 1px solid #bbc0c9; }
.warn .caret { border-top-color: #999; }
.cells { width: 104px; height: 10px; padding-left: 36px; }
.cells i { display: block; height: 10px; border-left: 1px solid #bbc0c9; }
.sel { border-left: 0; padding-left: 2px; padding-right: 2px; gap: 5px; }
.spin { display: grid; gap: 3px; }
.nav3 { padding-right: 0; }
```
